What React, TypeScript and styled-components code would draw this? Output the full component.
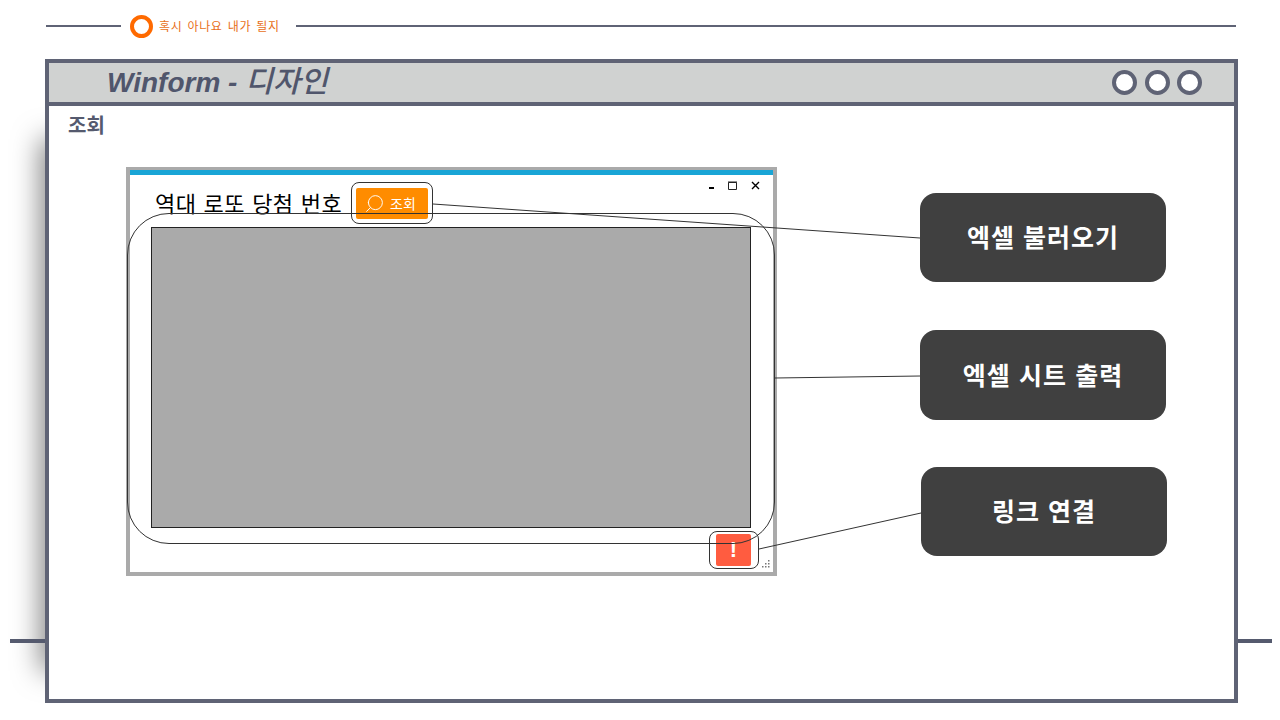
import styled, { createGlobalStyle } from "styled-components"
import { Search } from "lucide-react"

const GlobalStyle = createGlobalStyle`
  html, body { margin: 0; padding: 0; background: #fff; }
  body { font-family: "Noto Sans CJK KR", "Noto Sans", sans-serif; }
`

const Page = styled.div`
  position: relative;
  isolation: isolate;
  width: 1280px;
  height: 720px;
  overflow: hidden;
  background: #fff;
`

const TopBar = styled.header`
  display: flex;
  align-items: center;
  height: 24px;
  padding: 14px 44px 0 46px;
`

const TopLine = styled.div<{ $grow?: boolean }>`
  height: 2px;
  background: #5f6375;
  width: 75px;
  ${(p) => (p.$grow ? "flex: 1;" : "")}
`

const Dot = styled.span`
  box-sizing: border-box;
  width: 23px;
  height: 23px;
  margin-left: 9px;
  border: 4px solid #ff6a00;
  border-radius: 50%;
`

const TopText = styled.span`
  width: 137px;
  margin-left: 6px;
  font-size: 12px;
  line-height: 16px;
  letter-spacing: 0.6px;
  word-spacing: 2px;
  color: #e8701a;
`

const FloorLine = styled.div`
  position: absolute;
  left: 10px;
  top: 639px;
  width: 1262px;
  height: 4px;
  background: #555a6e;
`

const Frame = styled.section`
  position: absolute;
  left: 45px;
  top: 59px;
  box-sizing: border-box;
  width: 1193px;
  height: 644px;
  border: 4px solid #5f6375;
  background: #fff;

  &::before {
    content: "";
    position: absolute;
    left: -4px;
    top: 76px;
    bottom: 28px;
    width: 30px;
    box-shadow: -4px 0 28px rgba(0, 0, 0, 0.5);
    z-index: -1;
  }
`

const FrameTitleBar = styled.div`
  display: flex;
  align-items: center;
  justify-content: space-between;
  box-sizing: border-box;
  height: 43px;
  padding: 0 32px 0 58px;
  border-bottom: 4px solid #5f6375;
  background: #d0d2d1;
`

const FrameTitle = styled.h1`
  margin: 0 0 4px;
  font-family: "Liberation Sans", "Noto Sans CJK KR", sans-serif;
  font-size: 28px;
  line-height: 38px;
  font-style: italic;
  font-weight: 700;
  color: #50566c;

  span {
    font-family: "Noto Sans CJK KR", sans-serif;
    font-size: 30px;
    font-weight: 500;
  }
`

const FrameButtons = styled.div`
  display: flex;
  gap: 7.5px;
`

const RoundButton = styled.span`
  box-sizing: border-box;
  width: 25px;
  height: 25px;
  border: 4px solid #5f6375;
  border-radius: 50%;
  background: #fff;
`

const FrameBody = styled.div`
  padding: 7px 0 0 19px;
`

const SectionLabel = styled.h2`
  margin: 0;
  font-size: 20px;
  line-height: 24px;
  font-weight: 700;
  color: #555a6e;
`

const Diagram = styled.div`
  display: flex;
  align-items: flex-start;
  margin: 30px 0 0 58px;
`

const MockWindow = styled.div`
  position: relative;
  box-sizing: border-box;
  flex: none;
  width: 651px;
  height: 409px;
  border: 4px solid #aaa;
  border-top-width: 3px;
  background: #fff;
`

const MockAccent = styled.div`
  height: 5px;
  background: #19a5d6;
`

const MockControls = styled.div`
  position: absolute;
  right: 13px;
  top: 10px;
  display: flex;
  align-items: center;
  gap: 13px;
  height: 10px;

  svg:last-child {
    margin-left: 1px;
  }
`

const MockHeader = styled.div`
  display: flex;
  align-items: center;
  box-sizing: border-box;
  height: 52px;
  padding: 4px 0 0 25px;
`

const MockTitle = styled.span`
  padding-bottom: 2px;
  font-size: 22px;
  line-height: 30px;
  letter-spacing: 0.4px;
  word-spacing: 2px;
  color: #000;
`

const SearchButton = styled.button`
  display: flex;
  align-items: center;
  gap: 5px;
  box-sizing: border-box;
  width: 72px;
  height: 31px;
  margin-left: 14px;
  padding: 0 0 0 8px;
  border: 0;
  border-radius: 2px;
  background: #ff8c00;
  color: #fff;
  font-family: inherit;
  font-size: 14px;
`

const SearchIcon = styled(Search)`
  flex: none;
  transform: scaleX(-1);
`

const MockGrid = styled.div`
  box-sizing: border-box;
  width: 600px;
  height: 301px;
  margin-left: 21px;
  border: 1px solid #222;
  background: #aaa;
`

const AlertButton = styled.button`
  position: absolute;
  left: 586px;
  top: 364px;
  width: 35px;
  height: 32px;
  padding: 0;
  border: 0;
  border-radius: 2px;
  background: #ff5c40;
  color: #fff;
  font-family: "Liberation Sans", sans-serif;
  font-size: 22px;
  font-weight: 700;
  line-height: 30px;
`

const Grip = styled.svg`
  position: absolute;
  right: 3px;
  bottom: 3px;
`

const Outline = styled.div<{ $x: number; $y: number; $w: number; $h: number; $r: number }>`
  position: absolute;
  left: ${(p) => p.$x}px;
  top: ${(p) => p.$y}px;
  box-sizing: border-box;
  width: ${(p) => p.$w}px;
  height: ${(p) => p.$h}px;
  border: 1px solid #333;
  border-radius: ${(p) => p.$r}px;
`

const Callouts = styled.div`
  display: flex;
  flex-direction: column;
  margin: 26px 0 0 143px;
`

const Callout = styled.div<{ $h: number; $gap: number; $shift?: number }>`
  display: flex;
  align-items: center;
  justify-content: center;
  box-sizing: border-box;
  width: 246px;
  height: ${(p) => p.$h}px;
  margin-top: ${(p) => p.$gap}px;
  margin-left: ${(p) => p.$shift ?? 0}px;
  padding-bottom: 3px;
  border-radius: 16px;
  background: #404040;
  color: #fff;
  font-size: 25px;
  font-weight: 700;
  letter-spacing: 1px;
  word-spacing: 1.5px;
`

const Leaders = styled.svg`
  position: absolute;
  left: 0;
  top: 0;
  pointer-events: none;
`

export default function App() {
  return (
    <Page>
      <GlobalStyle />
      <TopBar>
        <TopLine />
        <Dot />
        <TopText>혹시 아나요 내가 될지</TopText>
        <TopLine $grow />
      </TopBar>
      <FloorLine />
      <Frame>
        <FrameTitleBar>
          <FrameTitle>
            Winform - <span>디자인</span>
          </FrameTitle>
          <FrameButtons>
            <RoundButton />
            <RoundButton />
            <RoundButton />
          </FrameButtons>
        </FrameTitleBar>
        <FrameBody>
          <SectionLabel>조회</SectionLabel>
          <Diagram>
            <MockWindow>
              <MockAccent />
              <MockControls>
                <svg width="7" height="8" viewBox="0 0 7 8">
                  <path d="M1 7h5" stroke="#000" strokeWidth="2" />
                </svg>
                <svg width="9" height="9" viewBox="0 0 9 9">
                  <path d="M.5 1.5h8v7h-8z" fill="none" stroke="#222" />
                  <path d="M0 1h9" stroke="#222" />
                </svg>
                <svg width="9" height="9" viewBox="0 0 9 9">
                  <path d="M1 1l7 7M8 1l-7 7" stroke="#000" strokeWidth="1.4" />
                </svg>
              </MockControls>
              <MockHeader>
                <MockTitle>역대 로또 당첨 번호</MockTitle>
                <SearchButton>
                  <SearchIcon size={21} strokeWidth={1.1} />
                  조회
                </SearchButton>
              </MockHeader>
              <MockGrid />
              <AlertButton>!</AlertButton>
              <Grip width="9" height="9" viewBox="0 0 9 9" fill="#777">
                <path d="M7 0h1.5v1.5H7zM4 3h1.5v1.5H4zM7 3h1.5v1.5H7zM1 6h1.5v1.5H1zM4 6h1.5v1.5H4zM7 6h1.5v1.5H7z" />
              </Grip>
              <Outline $x={-3} $y={43} $w={648} $h={331} $r={42} />
              <Outline $x={221} $y={12} $w={82} $h={42} $r={8} />
              <Outline $x={579} $y={361} $w={50} $h={38} $r={8} />
            </MockWindow>
            <Callouts>
              <Callout $h={89} $gap={0}>엑셀 불러오기</Callout>
              <Callout $h={90} $gap={48}>엑셀 시트 출력</Callout>
              <Callout $h={89} $gap={47} $shift={1}>링크 연결</Callout>
            </Callouts>
          </Diagram>
        </FrameBody>
      </Frame>
      <Leaders width="1280" height="720" viewBox="0 0 1280 720">
        <path d="M433 204L920 238M775 378L920 376M759 549L921 513" stroke="#333" strokeWidth="1" fill="none" />
      </Leaders>
    </Page>
  )
}
